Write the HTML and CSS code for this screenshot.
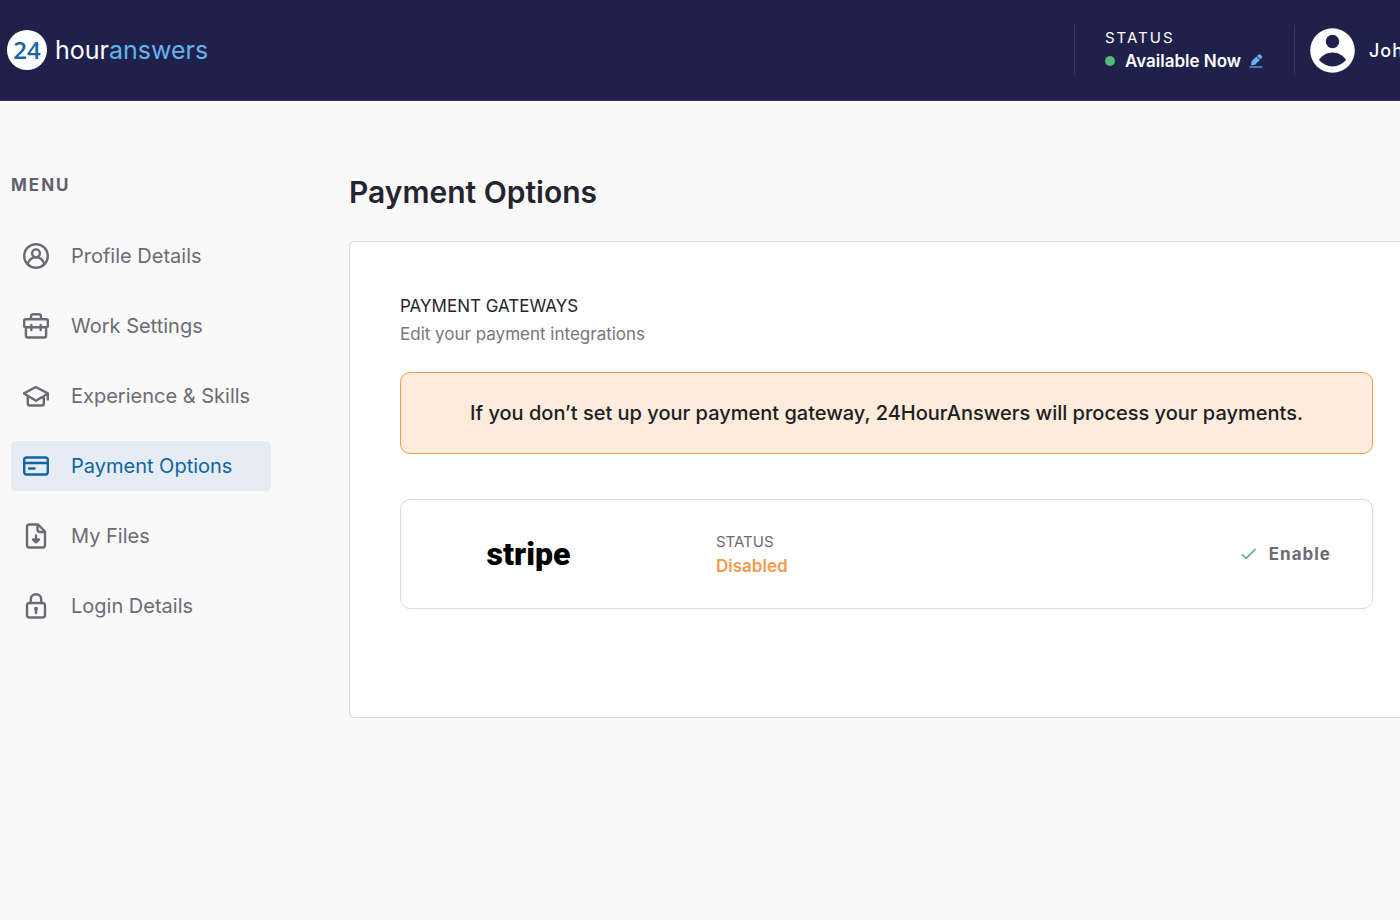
FILE: index.html
```html
<!DOCTYPE html>
<html lang="en">
<head>
<meta charset="utf-8">
<meta name="viewport" content="width=device-width, initial-scale=1">
<title>Payment Options</title>
<link rel="stylesheet" href="styles.css">
</head>
<body>
<header class="topbar">
  <a class="brand" href="#"><span class="brand-badge">24</span><span class="brand-name">hour<span class="brand-accent">answers</span></span></a>
  <div class="account">
    <div class="status">
      <span class="status-label">STATUS</span>
      <div class="status-row">
        <span class="status-dot"></span>
        <span class="status-value">Available Now</span>
        <button class="icon-button" type="button" aria-label="Edit status">
          <svg width="14" height="14" viewBox="0 0 14 14"><path d="M2.500 7.200 7.300 2.600l3.500 3.500-4.800 4.600-4 .9zM8 2 9.600.500q.9-.7 1.700 0l1.600 1.600q.7.8 0 1.600l-1.600 1.600z" fill="#65b2ed"/><path d="M.5 13h13" stroke="#65b2ed" stroke-width="1.200"/></svg>
        </button>
      </div>
    </div>
    <a class="user" href="#">
      <svg class="avatar" width="45" height="45" viewBox="0 0 45 45"><circle cx="22.500" cy="22.500" r="22.300" fill="#fff"/><circle cx="22.500" cy="13.500" r="6.700" fill="#20214a"/><path d="M9 31.800c3-4.700 8.200-7.400 13.500-7.400S33 27.100 36 31.800c-3 4-8.200 6.600-13.500 6.600S12 35.800 9 31.800z" fill="#20214a"/></svg>
      <span>John</span>
    </a>
  </div>
</header>
<div class="layout">
  <nav class="sidebar" aria-label="Menu">
    <h2 class="menu-title">MENU</h2>
    <ul class="menu">
      <li><a class="menu-link" href="#"><svg class="menu-icon" viewBox="0 0 26 26"><circle cx="13" cy="13" r="11.800"/><circle cx="13" cy="10.300" r="3.900"/><path d="M4.700 21c1.200-4 4-6.800 8.300-6.800s7.100 2.800 8.300 6.800"/></svg>Profile Details</a></li>
      <li><a class="menu-link" href="#"><svg class="menu-icon" viewBox="0 0 26 26"><path d="M2.700 6.200h20.600q1.500 0 1.500 1.500v5q0 1.500-1.500 1.500H2.700q-1.500 0-1.500-1.500v-5q0-1.500 1.500-1.500zM2.900 14.200v8.300q0 2 2 2h16.200q2 0 2-2v-8.300M8 6V3.500Q8 1.200 10.300 1.200h5.400Q18 1.200 18 3.500V6M8.300 12v5M17.700 12v5"/></svg>Work Settings</a></li>
      <li><a class="menu-link" href="#"><svg class="menu-icon" viewBox="0 0 26 26"><path d="M1 10.400 12.800 4l12 6.400L13 17.800zM4.800 13v7.500q0 2 2 2h12q2 0 2-2V13M24.800 10.400v6"/></svg>Experience &amp; Skills</a></li>
      <li><a class="menu-link menu-link-active" href="#" aria-current="page"><svg class="menu-icon" viewBox="0 0 26 26"><rect x="1.200" y="4.500" width="23.600" height="17" rx="2.500"/><path d="M1.200 10h23.600M6 15.500h5.500"/></svg>Payment Options</a></li>
      <li><a class="menu-link" href="#"><svg class="menu-icon" viewBox="0 0 26 26"><path d="M15 1.500H6.500Q4 1.500 4 4v18q0 2.500 2.500 2.500h13Q22 24.500 22 22V8.500zM14.500 1.500V6.500q0 2.500 2.500 2.500h5M13 12.500v6M10 16.500l3 2.800 3-2.800z"/></svg>My Files</a></li>
      <li><a class="menu-link" href="#"><svg class="menu-icon" viewBox="0 0 26 26"><rect x="4" y="10" width="18" height="14.500" rx="2.500"/><path d="M7.800 10V6.400a5.200 5.200 0 0 1 10.400 0V10M13 15.500v4.500"/><circle cx="13" cy="15.800" r=".8"/></svg>Login Details</a></li>
    </ul>
  </nav>
  <main class="content">
    <h1 class="page-title">Payment Options</h1>
    <section class="panel">
      <h2 class="section-title">PAYMENT GATEWAYS</h2>
      <p class="section-note">Edit your payment integrations</p>
      <p class="notice">If you don’t set up your payment gateway, 24HourAnswers will process your payments.</p>
      <div class="gateway">
        <div class="gateway-logo">stripe</div>
        <div class="gateway-status">
          <span class="gateway-label">STATUS</span>
          <span class="gateway-value">Disabled</span>
        </div>
        <button class="enable" type="button"><svg width="16" height="12" viewBox="0 0 16 12"><path d="M1 6.200 5.200 10.400 14.600 1" fill="none" stroke="#50b678" stroke-width="1.600"/></svg>Enable</button>
      </div>
    </section>
  </main>
</div>
</body>
</html>
```
FILE: styles.css
```css
* { box-sizing: border-box; }
body {
  margin: 0;
  min-height: 100vh;
  overflow-x: hidden;
  background: #f9f9f9;
  color: #24252f;
  font-family: Inter, "Open Sans", sans-serif;
}
h1, h2, p, ul { margin: 0; padding: 0; }
a { color: inherit; text-decoration: none; }
button { padding: 0; border: 0; background: none; font: inherit; cursor: pointer; }
svg { display: block; flex: none; }

.topbar {
  display: flex;
  justify-content: space-between;
  align-items: center;
  height: 101px;
  padding-left: 7px;
  overflow: hidden;
  background: #20214a;
  border-bottom: 1px solid #36355f;
  color: #fff;
}
.brand { display: flex; align-items: center; gap: 8px; }
.brand-badge {
  display: grid;
  place-items: center;
  width: 40px;
  height: 40px;
  border-radius: 50%;
  background: #fff;
  color: #1565a8;
  font: 600 24px/38px "Open Sans", sans-serif;
}
.brand-name { font-size: 25px; line-height: 32px; }
.brand-accent { color: #65b2ed; }
.account { display: flex; align-items: center; height: 50px; }
.status {
  display: flex;
  flex-direction: column;
  justify-content: center;
  width: 220px;
  height: 50px;
  padding-left: 30px;
  border-left: 1px solid #3a3b60;
}
.status-label { font-size: 15px; line-height: 22px; letter-spacing: 2px; }
.status-row { display: flex; align-items: center; line-height: 24px; }
.status-dot { width: 10px; height: 10px; margin-right: 10px; border-radius: 50%; background: #55b878; }
.status-value { margin-right: 8px; font-size: 17px; font-weight: 600; white-space: nowrap; }
.user {
  display: flex;
  align-items: center;
  gap: 14px;
  width: 106px;
  height: 50px;
  padding-left: 15px;
  border-left: 1px solid #3a3b60;
  font-size: 18px;
  font-weight: 500;
  letter-spacing: 1px;
}

.layout { display: grid; grid-template-columns: 260px minmax(0, 1fr); gap: 78px; padding: 70px 0 60px 11px; }
.menu-title { color: #62616b; font-size: 17px; font-weight: 700; line-height: 28px; letter-spacing: 2px; }
.menu { display: grid; gap: 20px; margin-top: 32px; list-style: none; }
.menu-link {
  display: flex;
  align-items: center;
  gap: 22px;
  height: 50px;
  padding: 0 12px;
  border-radius: 5px;
  color: #6c6b75;
  font-size: 20px;
}
.menu-link-active { background: #e5ecf3; color: #1164a5; }
.menu-icon { width: 26px; height: 26px; fill: none; stroke: currentColor; stroke-width: 2.4; stroke-linejoin: round; stroke-linecap: round; }

/* The panel runs past the right edge of the window. */
.content { margin-right: -24px; }
.page-title { font-size: 30px; font-weight: 600; line-height: 42px; }
.panel { margin-top: 28px; padding: 50px 50px 108px; background: #fff; border: 1px solid #d9d9dc; border-radius: 5px; }
.section-title { font-size: 17px; font-weight: 400; line-height: 28px; }
.section-note { color: #77767e; font-size: 17px; line-height: 28px; }
.notice {
  margin: 24px 0 45px;
  padding: 26px 20px;
  background: #fdebdc;
  border: 1px solid #f39b4a;
  border-radius: 10px;
  color: #20201f;
  font-size: 20px;
  font-weight: 500;
  line-height: 28px;
  text-align: center;
}
.gateway {
  display: grid;
  grid-template-columns: 255px 1fr auto;
  gap: 60px;
  align-items: center;
  min-height: 110px;
  padding: 0 41px 0 0;
  border: 1px solid #d9d8e6;
  border-radius: 10px;
}
.gateway-logo { color: #000; font: 900 32px/40px Roboto, sans-serif; text-align: center; }
.gateway-status { display: grid; line-height: 25px; }
.gateway-label { color: #6c6b75; font-size: 15px; }
.gateway-value { color: #f39b4f; font-size: 17px; font-weight: 600; }
.enable { display: flex; align-items: center; gap: 12px; color: #6c6b75; font-size: 17px; font-weight: 700; letter-spacing: 1px; }
```
